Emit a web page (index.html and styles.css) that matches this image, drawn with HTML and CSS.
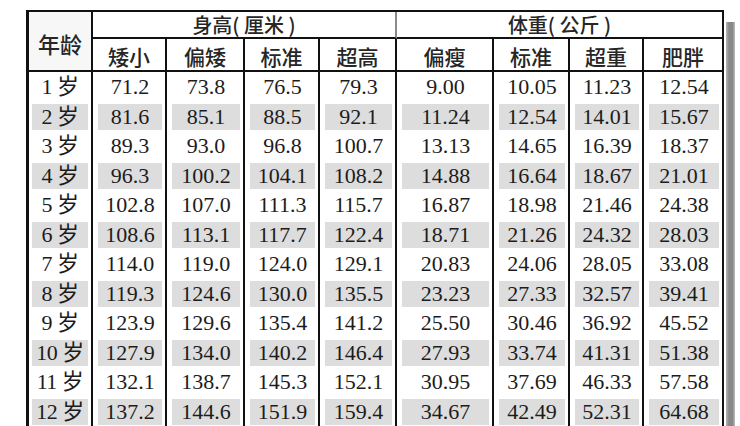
FILE: index.html
```html
<!DOCTYPE html>
<html lang="zh-CN">
<head>
<meta charset="utf-8">
<title>儿童身高体重标准表</title>
<link rel="stylesheet" href="styles.css">
</head>
<body>
<div class="page">
  <table class="chart">
    <colgroup>
      <col class="c-age">
      <col class="c1"><col class="c2"><col class="c3"><col class="c4">
      <col class="c5"><col class="c6"><col class="c7"><col class="c8">
    </colgroup>
    <thead>
      <tr class="head1">
        <th rowspan="2" class="age-head">年龄</th>
        <th colspan="4" class="group group-split">身高(&nbsp;厘米&nbsp;)</th>
        <th colspan="4" class="group">体重(&nbsp;公斤&nbsp;)</th>
      </tr>
      <tr class="head2">
        <th>矮小</th><th>偏矮</th><th>标准</th><th>超高</th>
        <th>偏瘦</th><th>标准</th><th>超重</th><th>肥胖</th>
      </tr>
    </thead>
    <tbody>
      <tr><td class="age">1 岁</td><td>71.2</td><td>73.8</td><td>76.5</td><td>79.3</td><td>9.00</td><td>10.05</td><td>11.23</td><td>12.54</td></tr>
      <tr><td class="age">2 岁</td><td>81.6</td><td>85.1</td><td>88.5</td><td>92.1</td><td>11.24</td><td>12.54</td><td>14.01</td><td>15.67</td></tr>
      <tr><td class="age">3 岁</td><td>89.3</td><td>93.0</td><td>96.8</td><td>100.7</td><td>13.13</td><td>14.65</td><td>16.39</td><td>18.37</td></tr>
      <tr><td class="age">4 岁</td><td>96.3</td><td>100.2</td><td>104.1</td><td>108.2</td><td>14.88</td><td>16.64</td><td>18.67</td><td>21.01</td></tr>
      <tr><td class="age">5 岁</td><td>102.8</td><td>107.0</td><td>111.3</td><td>115.7</td><td>16.87</td><td>18.98</td><td>21.46</td><td>24.38</td></tr>
      <tr><td class="age">6 岁</td><td>108.6</td><td>113.1</td><td>117.7</td><td>122.4</td><td>18.71</td><td>21.26</td><td>24.32</td><td>28.03</td></tr>
      <tr><td class="age">7 岁</td><td>114.0</td><td>119.0</td><td>124.0</td><td>129.1</td><td>20.83</td><td>24.06</td><td>28.05</td><td>33.08</td></tr>
      <tr><td class="age">8 岁</td><td>119.3</td><td>124.6</td><td>130.0</td><td>135.5</td><td>23.23</td><td>27.33</td><td>32.57</td><td>39.41</td></tr>
      <tr><td class="age">9 岁</td><td>123.9</td><td>129.6</td><td>135.4</td><td>141.2</td><td>25.50</td><td>30.46</td><td>36.92</td><td>45.52</td></tr>
      <tr><td class="age">10 岁</td><td>127.9</td><td>134.0</td><td>140.2</td><td>146.4</td><td>27.93</td><td>33.74</td><td>41.31</td><td>51.38</td></tr>
      <tr><td class="age">11 岁</td><td>132.1</td><td>138.7</td><td>145.3</td><td>152.1</td><td>30.95</td><td>37.69</td><td>46.33</td><td>57.58</td></tr>
      <tr><td class="age">12 岁</td><td>137.2</td><td>144.6</td><td>151.9</td><td>159.4</td><td>34.67</td><td>42.49</td><td>52.31</td><td>64.68</td></tr>
    </tbody>
  </table>
  <div class="edge"></div>
</div>
</body>
</html>
```

FILE: styles.css
```css
html, body {
  margin: 0;
  padding: 0;
  background: #ffffff;
}

.page {
  display: flex;
  align-items: flex-start;
  padding: 10px 0 0 26px;
  height: 426px;
  box-sizing: border-box;
  overflow: hidden;
}

.chart {
  border-collapse: separate;
  border-spacing: 0;
  table-layout: fixed;
  width: 698px;
  border-top: 2px solid #111;
  border-left: 3px solid #111;
  color: #1c1c1c;
  flex: none;
}

.c-age { width: 64px; }
.c1 { width: 74px; }
.c2 { width: 78px; }
.c3 { width: 75px; }
.c4 { width: 77px; }
.c5 { width: 97px; }
.c6 { width: 76px; }
.c7 { width: 74px; }
.c8 { width: 80px; }

.chart th,
.chart td {
  border-right: 2px solid #111;
  text-align: center;
  vertical-align: middle;
  padding: 0;
  white-space: nowrap;
}

.chart th {
  font-family: "Noto Sans CJK SC", "Noto Sans", sans-serif;
  font-weight: 500;
  font-size: 21px;
  line-height: 22px;
  color: #262626;
}

.head1 { height: 27px; }
.head1 th { border-bottom: 2px solid #111; }
.head1 .age-head {
  font-size: 22px;
  background: #f7f7f7;
  padding-top: 3px;
}
.head1 .group {
  font-size: 20px;
  line-height: 22px;
  padding-top: 0;
}
.head1 .group-split { border-right-color: #8a8a8a; }

.head2 { height: 33px; }
.head2 th {
  border-bottom: 2px solid #111;
  padding-top: 3px;
}
.chart .age-head { border-bottom: 2px solid #111; }

.chart tbody tr { height: 29.5px; }

.chart td {
  font-family: "Liberation Serif", "Noto Sans CJK SC", serif;
  font-size: 22px;
  line-height: 1;
  padding: 2px 3px 1px 5px;
  background-clip: content-box;
}

.chart td.age {
  font-size: 22px;
  padding-left: 3px;
  letter-spacing: -0.5px;
}

.chart tbody tr:nth-child(even) td {
  background-color: #dddddd;
}

.edge {
  flex: none;
  width: 9px;
  height: 404px;
  margin-top: 12px;
  margin-left: 2px;
  background: linear-gradient(to right, #b5b5b5 0, #8c8c8c 30%, #858585 70%, #bdbdbd 100%);
}
```
